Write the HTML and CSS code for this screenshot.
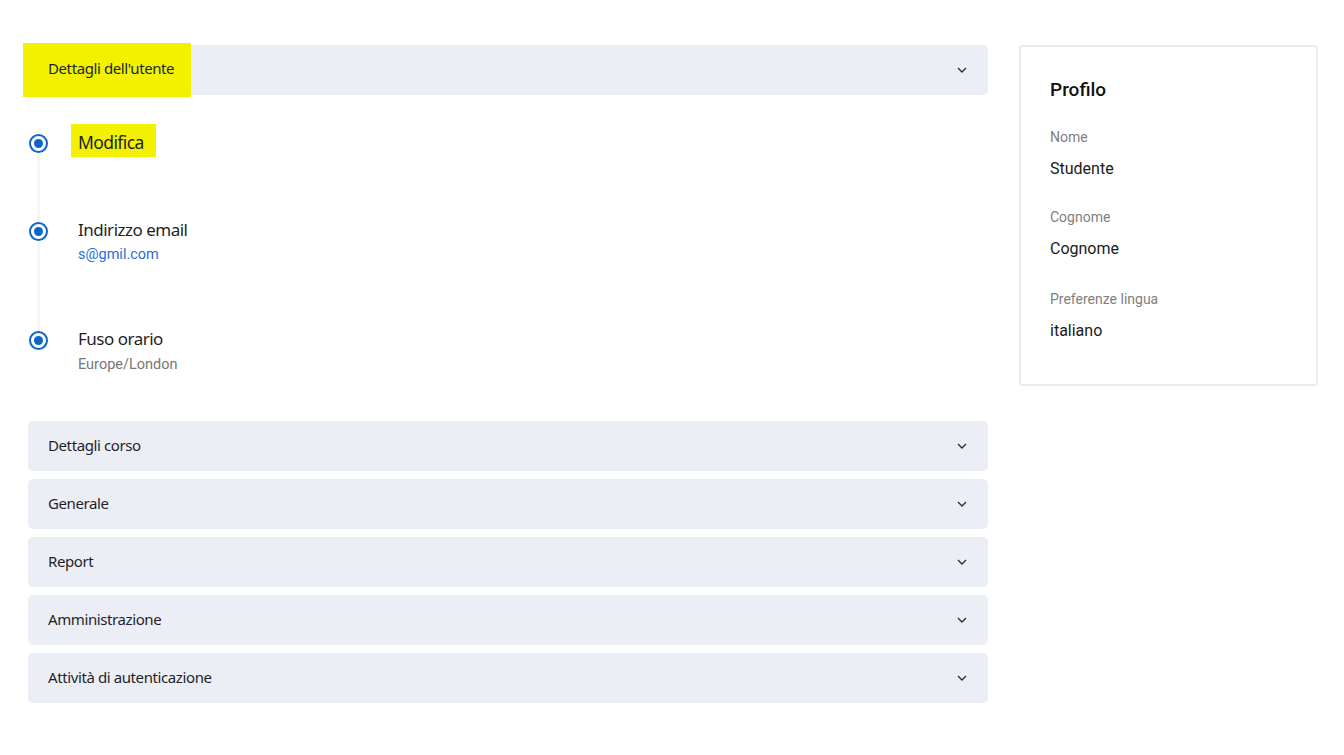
FILE: index.html
```html
<!DOCTYPE html>
<html lang="it">
<head>
<meta charset="utf-8">
<title>Profilo</title>
<link rel="stylesheet" href="styles.css">
</head>
<body>
<div class="page">
  <main class="main">
    <div class="acc acc-first">
      <div class="acc-head">
        <span class="hl hl-head">Dettagli dell'utente</span>
        <svg class="chev" width="10" height="6" viewBox="0 0 10 6"><path d="M1 1l4 4 4-4" fill="none" stroke="#1f2a44" stroke-width="1.3"/></svg>
      </div>
    </div>
    <ul class="timeline">
      <li class="tl-item tl-first">
        <span class="dot"></span>
        <div class="tl-body"><span class="hl hl-mod">Modifica</span></div>
      </li>
      <li class="tl-item tl-mid">
        <span class="dot"></span>
        <div class="tl-body">
          <div class="tl-title">Indirizzo email</div>
          <div class="tl-sub link">s@gmil.com</div>
        </div>
      </li>
      <li class="tl-item tl-last">
        <span class="dot"></span>
        <div class="tl-body">
          <div class="tl-title">Fuso orario</div>
          <div class="tl-sub">Europe/London</div>
        </div>
      </li>
    </ul>
    <div class="acc-list">
      <div class="acc"><div class="acc-head"><span>Dettagli corso</span><svg class="chev" width="10" height="6" viewBox="0 0 10 6"><path d="M1 1l4 4 4-4" fill="none" stroke="#1f2a44" stroke-width="1.3"/></svg></div></div>
      <div class="acc"><div class="acc-head"><span>Generale</span><svg class="chev" width="10" height="6" viewBox="0 0 10 6"><path d="M1 1l4 4 4-4" fill="none" stroke="#1f2a44" stroke-width="1.3"/></svg></div></div>
      <div class="acc"><div class="acc-head"><span>Report</span><svg class="chev" width="10" height="6" viewBox="0 0 10 6"><path d="M1 1l4 4 4-4" fill="none" stroke="#1f2a44" stroke-width="1.3"/></svg></div></div>
      <div class="acc"><div class="acc-head"><span>Amministrazione</span><svg class="chev" width="10" height="6" viewBox="0 0 10 6"><path d="M1 1l4 4 4-4" fill="none" stroke="#1f2a44" stroke-width="1.3"/></svg></div></div>
      <div class="acc"><div class="acc-head"><span>Attività di autenticazione</span><svg class="chev" width="10" height="6" viewBox="0 0 10 6"><path d="M1 1l4 4 4-4" fill="none" stroke="#1f2a44" stroke-width="1.3"/></svg></div></div>
    </div>
  </main>
  <aside class="card">
    <h2 class="card-title">Profilo</h2>
    <dl class="fields">
      <dt>Nome</dt><dd>Studente</dd>
      <dt>Cognome</dt><dd>Cognome</dd>
      <dt>Preferenze lingua</dt><dd>italiano</dd>
    </dl>
  </aside>
</div>
</body>
</html>
```
FILE: styles.css
```css
* { box-sizing: border-box; }
html, body { margin: 0; padding: 0; background: #fff; }
body { font-family: "Noto Sans", "Open Sans", sans-serif; color: #1a1a1a; }

.page {
  display: flex;
  align-items: flex-start;
  gap: 31px;
  padding: 45px 27px 0 28px;
}
.main { width: 960px; flex: none; }

.acc-head {
  display: flex;
  align-items: center;
  justify-content: space-between;
  height: 50px;
  padding: 0 20px 3px 20px;
  background: #eceef6;
  border-radius: 5px;
  font-size: 15px;
  letter-spacing: -0.4px;
  color: #1f1f2a;
}
.acc-head .chev { margin-bottom: -3px; }
.acc-first .acc-head { padding-left: 0; padding-bottom: 0; }
.acc-first .acc-head .chev { margin-bottom: 0; }

.hl { background: #f2f200; }
.hl-head {
  display: flex;
  align-items: center;
  height: 54px;
  margin: -2px 0 -2px -5px;
  padding: 0 17px 4px 25px;
}
.chev { flex: none; margin-right: 1px; }

.timeline {
  list-style: none;
  margin: 0;
  padding: 29px 0 0 0;
}
.tl-item {
  position: relative;
  display: flex;
  align-items: flex-start;
}
.tl-item::before {
  content: "";
  position: absolute;
  left: 9px;
  top: 0;
  bottom: 0;
  width: 3px;
  background: #f3f5fa;
}
.tl-first { height: 89px; }
.tl-mid { height: 109px; }
.tl-last { height: 99px; }
.tl-first::before { top: 20px; }
.tl-last::before { bottom: auto; height: 10px; }
.dot {
  position: relative;
  flex: none;
  width: 19px;
  height: 19px;
  margin-left: 1px;
  margin-top: 9px;
  border-radius: 50%;
  border: 2.5px solid #0a66c9;
  background: #fff;
  z-index: 1;
}
.tl-first .dot { margin-top: 10px; }
.dot::after {
  content: "";
  position: absolute;
  left: 2.5px; top: 2.5px;
  width: 9px; height: 9px;
  border-radius: 50%;
  background: #0a66c9;
}
.tl-body { padding-left: 30px; padding-top: 5px; }
.tl-first .tl-body { padding-top: 0; }
.hl-mod {
  display: flex;
  align-items: center;
  height: 33px;
  padding: 3px 12px 0 7px;
  margin-left: -7px;
  font-size: 17.5px;
  letter-spacing: -0.6px;
  color: #1f1f1f;
}
.tl-title { font-size: 17px; letter-spacing: -0.5px; color: #1f1f1f; line-height: 24px; }
.tl-sub { font-family: Roboto, sans-serif; font-size: 14.5px; color: #777; margin-top: 3px; line-height: 20px; }
.tl-last .tl-sub { margin-top: 4px; }
.tl-sub.link { color: #2a6fd6; }

.acc-list { display: flex; flex-direction: column; gap: 8px; }

.card {
  width: 299px;
  flex: none;
  border: 2px solid #e8ebf3;
  border-radius: 4px;
  padding: 31px 30px 42px 29px;
  font-family: Roboto, sans-serif;
}
.card-title {
  margin: 0 0 26px 0;
  font-size: 19px;
  font-weight: 500;
  color: #111;
  line-height: 24px;
}
.fields { margin: 0; }
.fields dt { font-size: 14px; color: #808080; line-height: 18px; }
.fields dd { margin: 13px 0 30px 0; font-size: 16px; color: #1a1a1a; line-height: 20px; }
.fields dd:first-of-type { margin-bottom: 29px; }
.fields dd:nth-of-type(2) { margin-bottom: 31px; }
.fields dd:last-child { margin-bottom: 1px; }
```
